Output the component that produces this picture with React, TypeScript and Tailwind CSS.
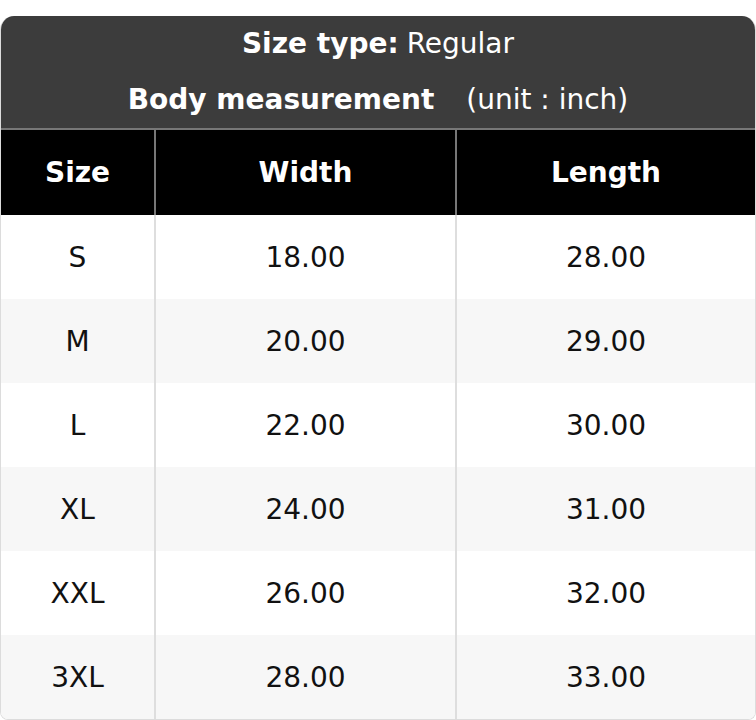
const rows = [
  { size: 'S', width: '18.00', length: '28.00' },
  { size: 'M', width: '20.00', length: '29.00' },
  { size: 'L', width: '22.00', length: '30.00' },
  { size: 'XL', width: '24.00', length: '31.00' },
  { size: 'XXL', width: '26.00', length: '32.00' },
  { size: '3XL', width: '28.00', length: '33.00' },
];

export default function App() {
  return (
    <div className="bg-white pt-4 font-['DejaVu_Sans',sans-serif]">
      <div className="overflow-hidden rounded-t-[14px] rounded-b-lg border border-t-0 border-[#dcdcdc]">
        <div className="bg-[#3c3c3c] text-[28px] text-white">
          <div className="flex h-14 items-center justify-center">
            <span className="font-bold">Size type:</span>
            <span className="ml-2">Regular</span>
          </div>
          <div className="flex h-14 items-center justify-center">
            <span className="font-bold">Body measurement</span>
            <span className="ml-8">(unit : inch)</span>
          </div>
        </div>
        <table className="w-full table-fixed border-collapse text-[28px]">
          <colgroup>
            <col className="w-[154px]" />
            <col className="w-[301px]" />
            <col />
          </colgroup>
          <thead>
            <tr className="h-[86px] border-t-2 border-[#777] bg-black text-white">
              <th className="border-r-2 border-[#777] font-bold">Size</th>
              <th className="border-r-2 border-[#777] font-bold">Width</th>
              <th className="font-bold">Length</th>
            </tr>
          </thead>
          <tbody className="text-[#111]">
            {rows.map((r, i) => (
              <tr key={r.size} className={`h-[84px] ${i % 2 ? 'bg-[#f7f7f7]' : 'bg-white'}`}>
                <td className="border-r-2 border-[#dedede] pt-0.5 text-center">{r.size}</td>
                <td className="border-r-2 border-[#dedede] pt-0.5 text-center">{r.width}</td>
                <td className="pt-0.5 text-center">{r.length}</td>
              </tr>
            ))}
          </tbody>
        </table>
      </div>
    </div>
  );
}
